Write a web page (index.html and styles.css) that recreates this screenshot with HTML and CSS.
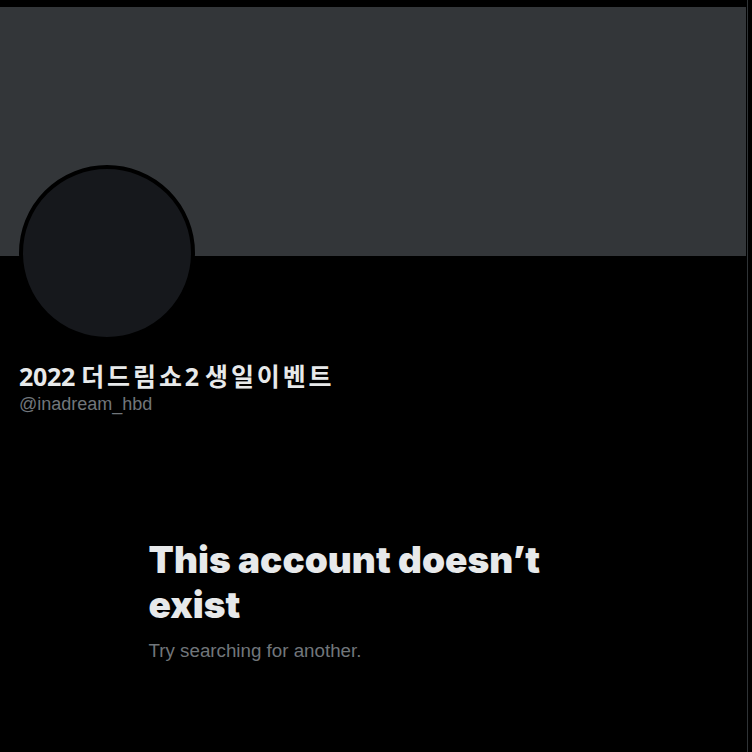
FILE: index.html
```html
<!DOCTYPE html>
<html lang="ko">
<head>
<meta charset="utf-8">
<title>2022 더드림쇼2 생일이벤트</title>
<link rel="stylesheet" href="styles.css">
</head>
<body>
<main class="column">
  <div class="topbar"></div>
  <div class="banner"></div>
  <section class="profile">
    <div class="avatar-row">
      <div class="avatar"></div>
    </div>
    <h2 class="name">2022 <span class="ko">더드림쇼</span>2 <span class="ko">생일이벤트</span></h2>
    <div class="handle">@inadream_hbd</div>
  </section>
  <section class="empty">
    <h1 class="empty-title">This account doesn’t exist</h1>
    <p class="empty-sub">Try searching for another.</p>
  </section>
</main>
</body>
</html>
```

FILE: styles.css
```css
html, body {
  margin: 0;
  padding: 0;
  background: #000;
  height: 100%;
  overflow: hidden;
}

.column {
  width: 747px;
  min-height: 752px;
  border-right: 1px solid #2f3336;
  box-sizing: content-box;
  display: flex;
  flex-direction: column;
}

.topbar {
  height: 7px;
  background: #000;
}

.banner {
  width: 746px;
  height: 249px;
  background: #333639;
}

.profile {
  padding: 0 20px;
  display: flex;
  flex-direction: column;
}

.avatar-row {
  margin-top: -91px;
  height: 196px;
}

.avatar {
  width: 168px;
  height: 168px;
  border-radius: 50%;
  background: #16181c;
  border: 4px solid #000;
  margin-left: -1px;
}

.name {
  margin: 0;
  font-family: "Open Sans", "Noto Sans CJK KR", sans-serif;
  font-weight: 700;
  font-size: 25px;
  line-height: 30px;
  letter-spacing: -0.3px;
  color: #e7e9ea;
  margin-left: -1px;
}

.ko {
  letter-spacing: 2.9px;
}

.handle {
  font-family: "Liberation Sans", "Noto Sans", sans-serif;
  font-size: 18px;
  line-height: 22px;
  color: #71767b;
  margin: 2px 0 0 -1px;
}

.empty {
  width: 450px;
  margin: 122px auto 0;
}

.empty-title {
  margin: 0;
  font-family: "Inter", "Liberation Sans", sans-serif;
  font-weight: 900;
  font-size: 37px;
  line-height: 45px;
  color: #e7e9ea;
}

.empty-sub {
  margin: 12px 0 0;
  font-family: "Liberation Sans", "Noto Sans", sans-serif;
  font-size: 18.75px;
  line-height: 24px;
  color: #71767b;
}
```
